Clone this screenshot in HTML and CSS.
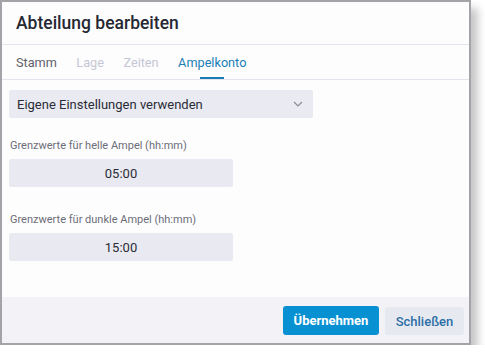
FILE: index.html
```html
<!DOCTYPE html>
<html lang="de">
<head>
  <meta charset="UTF-8">
  <title>Abteilung bearbeiten</title>
  <link rel="stylesheet" href="styles.css">
</head>
<body>
<div class="dialog">

  <div class="dialog-header">Abteilung bearbeiten</div>

  <div class="tabs">
    <div class="tab">Stamm</div>
    <div class="tab disabled">Lage</div>
    <div class="tab disabled">Zeiten</div>
    <div class="tab active">Ampelkonto</div>
  </div>

  <div class="dialog-body">
    <div class="select">
      <span>Eigene Einstellungen verwenden</span>
      <svg width="10" height="6" viewBox="0 0 10 6">
        <path d="M1 1 L5 5 L9 1" fill="none" stroke="#8a8c99" stroke-width="1.2"/>
      </svg>
    </div>

    <div class="field first">
      <div class="field-label">Grenzwerte für helle Ampel (hh:mm)</div>
      <div class="time-input">05:00</div>
    </div>

    <div class="field">
      <div class="field-label">Grenzwerte für dunkle Ampel (hh:mm)</div>
      <div class="time-input">15:00</div>
    </div>
  </div>

  <div class="dialog-footer">
    <button type="button" class="btn primary">Übernehmen</button>
    <button type="button" class="btn secondary">Schließen</button>
  </div>

</div>
</body>
</html>
```

FILE: styles.css
```css
body {
  margin: 0;
  background: #ffffff;
  font-family: Roboto, "Liberation Sans", sans-serif;
}

.dialog {
  width: 467px;
  height: 341px;
  border: 2px solid #a4a4a8;
  background: #fdfdfe;
  box-shadow: 7px 8px 8px rgba(0, 0, 0, 0.22);
  display: flex;
  flex-direction: column;
}

.dialog-header {
  height: 42px;
  border-bottom: 1px solid #e3e4ec;
  padding-left: 14px;
  display: flex;
  align-items: center;
  font-size: 17.5px;
  font-weight: 500;
  color: #262833;
}

.tabs {
  height: 34px;
  border-bottom: 1px solid #e3e4ec;
  padding-left: 14px;
  display: flex;
  gap: 19.5px;
}

.tab {
  display: flex;
  align-items: center;
  font-size: 12.7px;
  color: #5f616b;
  position: relative;
}

.tab.disabled {
  color: #c5c7d4;
}

.tab.active {
  color: #1a7db6;
}

.tab.active::after {
  content: "";
  position: absolute;
  left: 50%;
  bottom: 0;
  width: 24px;
  margin-left: -12px;
  height: 2px;
  background: #1a7db6;
}

.dialog-body {
  flex: 1;
  padding: 10px 7px 0;
}

.select {
  width: 288px;
  height: 28px;
  padding: 0 8px;
  background: #e9eaf2;
  border-radius: 2px;
  display: flex;
  align-items: center;
  justify-content: space-between;
  font-size: 13px;
  color: #2a2c36;
}

.select svg {
  margin-right: 2px;
}

.field {
  margin-top: 26px;
}

.field.first {
  margin-top: 21px;
}

.field-label {
  font-size: 11px;
  line-height: 14px;
  color: #6b6d78;
  padding-left: 1px;
  margin-bottom: 6px;
}

.time-input {
  width: 224px;
  height: 28px;
  background: #e8e9f1;
  border-radius: 2px;
  display: flex;
  align-items: center;
  justify-content: center;
  font-size: 13px;
  color: #2a2c36;
}

.dialog-footer {
  height: 46px;
  background: #f3f3f7;
  display: flex;
  justify-content: flex-end;
  align-items: flex-start;
  gap: 6px;
  padding: 9px 5px 0;
  box-sizing: border-box;
}

.btn {
  height: 29px;
  border: none;
  border-radius: 3px;
  font-family: Roboto, "Liberation Sans", sans-serif;
  font-size: 13px;
  padding: 0;
}

.btn.primary {
  width: 96px;
  background: #0791d2;
  color: #ffffff;
  font-weight: 700;
}

.btn.secondary {
  width: 79px;
  height: 28px;
  margin-top: 1px;
  background: #e7e9f1;
  color: #2c6fa6;
  font-weight: 500;
}
```
